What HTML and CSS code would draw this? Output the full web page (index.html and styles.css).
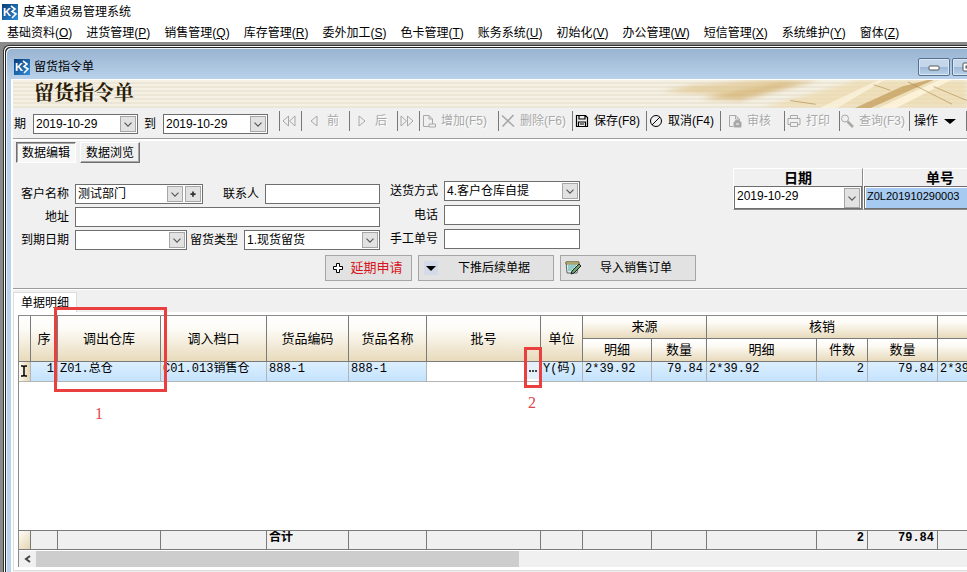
FILE: index.html
```html
<!DOCTYPE html>
<html lang="zh-CN">
<head>
    <meta charset="UTF-8">
    <meta name="viewport" content="width=device-width, initial-scale=1.0">
    <title>皮革通贸易管理系统</title>
    <link rel="stylesheet" href="styles.css">
</head>
<body>

    <!-- Shared icons -->
    <svg class="defs" width="0" height="0">
        <defs>
            <linearGradient id="logoBg" x1="0" y1="0" x2="1" y2="1">
                <stop offset="0" stop-color="#0a3c78"/>
                <stop offset="1" stop-color="#2f8fd8"/>
            </linearGradient>
            <symbol id="logo" viewBox="0 0 16 16">
                <rect width="16" height="16" fill="url(#logoBg)"/>
                <text x="1" y="12" class="logo-text">K</text>
                <path d="M9 2L13 5L10 7.500L14 10L10 14" fill="none" stroke="#fff" stroke-width="1.600"/>
            </symbol>
            <symbol id="chevron" viewBox="0 0 16 16">
                <path d="M4 6.500L8 10.500L12 6.500" fill="none" stroke="#555" stroke-width="1.300"/>
            </symbol>
        </defs>
    </svg>

    <header class="app-title">
        <svg class="logo"><use href="#logo"/></svg>
        <span>皮革通贸易管理系统</span>
    </header>

    <nav class="menu">
        <a href="#">基础资料(<u>O</u>)</a>
        <a href="#">进货管理(<u>P</u>)</a>
        <a href="#">销售管理(<u>Q</u>)</a>
        <a href="#">库存管理(<u>R</u>)</a>
        <a href="#">委外加工(<u>S</u>)</a>
        <a href="#">色卡管理(<u>T</u>)</a>
        <a href="#">账务系统(<u>U</u>)</a>
        <a href="#">初始化(<u>V</u>)</a>
        <a href="#">办公管理(<u>W</u>)</a>
        <a href="#">短信管理(<u>X</u>)</a>
        <a href="#">系统维护(<u>Y</u>)</a>
        <a href="#">窗体(<u>Z</u>)</a>
    </nav>

    <div class="workspace">
        <div class="window">
            <div class="window-title">
                <svg class="logo"><use href="#logo"/></svg>
                <span>留货指令单</span>
                <div class="window-buttons">
                    <button class="win-btn" aria-label="最小化">
                        <svg width="12" height="10"><rect x="1" y="4" width="10" height="4" rx="1" fill="#fff" stroke="#555"/></svg>
                    </button>
                    <button class="win-btn" aria-label="最大化">
                        <svg width="12" height="10"><rect x="1" y="1" width="10" height="8" rx="1" fill="#fff" stroke="#555"/><rect x="4" y="4" width="4" height="2" fill="#9db8d6" stroke="#555"/></svg>
                    </button>
                </div>
            </div>

            <div class="window-body">
                <div class="banner">
                    <h1>留货指令单</h1>
                    <svg class="banner-art" viewBox="0 0 340 30" preserveAspectRatio="none">
                        <defs><filter id="soft"><feGaussianBlur stdDeviation="2"/></filter></defs>
                        <g filter="url(#soft)">
                            <path d="M30 12L60 6L130 0H170L100 17Z" fill="#dfc48d" opacity="0.7"/>
                            <path d="M70 20L150 3L190 0L110 22Z" fill="#cfa95f" opacity="0.6"/>
                            <path d="M130 30L230 0H340V30Z" fill="#ecd8ab" opacity="0.7"/>
                        </g>
                        <path d="M190 30L250 0L256 0L208 30Z" fill="#fbf3dc" opacity="0.8"/>
                        <path d="M226 30L274 7L300 0H306L242 30Z" fill="#b98d45" opacity="0.6"/>
                        <path d="M250 30L312 0H324L268 30Z" fill="#fff6df" opacity="0.8"/>
                        <path d="M280 2L325 26M245 5L262 11M306 7L340 22M160 22L186 26" stroke="#a98244" opacity="0.6" fill="none"/>
                    </svg>
                </div>

                <div class="toolbar">
                    <div class="period">
                        <label for="dateFrom">期</label>
                        <div class="field date-field">
                            <input id="dateFrom" type="text" value="2019-10-29">
                            <button class="drop" aria-label="选择日期"><svg><use href="#chevron"/></svg></button>
                        </div>
                        <label for="dateTo">到</label>
                        <div class="field date-field">
                            <input id="dateTo" type="text" value="2019-10-29">
                            <button class="drop" aria-label="选择日期"><svg><use href="#chevron"/></svg></button>
                        </div>
                    </div>
                    <div class="tools">
                        <button class="tool tool-arrow" disabled aria-label="首张">
                            <svg viewBox="0 0 14 14"><path d="M6.500 2V12L1 7ZM13 2V12L7.500 7Z"/></svg>
                        </button>
                        <button class="tool tool-step" disabled>
                            <svg viewBox="0 0 14 14"><path d="M10 2V12L4 7Z"/></svg>前
                        </button>
                        <button class="tool tool-step" disabled>
                            <svg viewBox="0 0 14 14"><path d="M4 2V12L10 7Z"/></svg>后
                        </button>
                        <button class="tool tool-arrow" disabled aria-label="末张">
                            <svg viewBox="0 0 14 14"><path d="M1 2V12L6.500 7ZM7.500 2V12L13 7Z"/></svg>
                        </button>
                        <button class="tool tool-wide" disabled>
                            <svg viewBox="0 0 14 14"><path d="M7 12.500H1.500V1.500H7L10.500 5V7M7 1.500V5H10M10.500 7V10M7 10H13.500V13H7Z"/></svg>增加(F5)
                        </button>
                        <button class="tool tool-key" disabled>
                            <svg viewBox="0 0 14 14"><path d="M1 1.500L13 12.500M12.500 1L1.500 12.500" stroke-width="1.600"/></svg>删除(F6)
                        </button>
                        <button class="tool tool-key">
                            <svg viewBox="0 0 14 14"><path d="M1.500 1.500H10.500L12.500 3.500V12.500H1.500ZM4 1.500V5H10V1.500M3.500 12.500V8H10.500V12.500M5 10H9" stroke-width="1.200"/></svg>保存(F8)
                        </button>
                        <button class="tool tool-key">
                            <svg viewBox="0 0 14 14"><circle cx="7" cy="7" r="5.500"/><path d="M3 11L11 3"/></svg>取消(F4)
                        </button>
                        <button class="tool tool-mid" disabled>
                            <svg viewBox="0 0 14 14"><path d="M5 12.500H1.500V1.500H7.500L11.500 5V6M7.500 1.500V5H11"/><path d="M6 8H13V13H6ZM7.500 8V6.500H11.500V8" fill="#a8a8a8"/><path d="M8 10H11" stroke="#fff"/></svg>审核
                        </button>
                        <button class="tool tool-print" disabled>
                            <svg viewBox="0 0 14 14"><path d="M3.500 4.500V1.500H10.500V4.500M3 10.500H1V4.500H13V10.500H11M3.500 8.500H10.500V12.500H3.500Z"/></svg>打印
                        </button>
                        <button class="tool tool-find" disabled>
                            <svg viewBox="0 0 14 14"><circle cx="5" cy="4.500" r="3.500"/><path d="M7.500 7.500L13 13" stroke-width="2.500"/></svg>查询(F3)
                        </button>
                        <button class="tool tool-menu">操作
                            <svg viewBox="0 0 14 14"><path d="M1 5H13L7 10Z" fill="#000" stroke="none"/></svg>
                        </button>
                        <span class="tool-end"></span>
                    </div>
                </div>

                <div class="view-tabs">
                    <button class="view-tab active">数据编辑</button>
                    <button class="view-tab">数据浏览</button>
                </div>

                <form class="order-form">
                    <div class="form-left">
                        <div class="form-row">
                            <label class="lead" for="customer">客户名称</label>
                            <div class="field customer-field">
                                <input id="customer" type="text" value="测试部门">
                                <button type="button" class="drop" aria-label="选择客户"><svg><use href="#chevron"/></svg></button>
                                <button type="button" class="drop" aria-label="新增客户"><svg viewBox="0 0 16 16"><path d="M8 5V11M5 8H11" stroke="#333" stroke-width="2"/></svg></button>
                            </div>
                            <label class="contact-label" for="contact">联系人</label>
                            <input class="field grow" id="contact" type="text">
                        </div>
                        <div class="form-row">
                            <label class="lead" for="address">地址</label>
                            <input class="field grow" id="address" type="text">
                        </div>
                        <div class="form-row">
                            <label class="lead" for="dueDate">到期日期</label>
                            <div class="field due-field">
                                <input id="dueDate" type="text">
                                <button type="button" class="drop" aria-label="选择日期"><svg><use href="#chevron"/></svg></button>
                            </div>
                            <label class="type-label" for="holdType">留货类型</label>
                            <div class="field combo grow">
                                <select id="holdType"><option>1.现货留货</option></select>
                                <span class="drop"><svg><use href="#chevron"/></svg></span>
                            </div>
                        </div>
                    </div>
                    <div class="form-middle">
                        <div class="form-row">
                            <label class="second" for="delivery">送货方式</label>
                            <div class="field combo grow">
                                <select id="delivery"><option>4.客户仓库自提</option></select>
                                <span class="drop"><svg><use href="#chevron"/></svg></span>
                            </div>
                        </div>
                        <div class="form-row">
                            <label class="second" for="phone">电话</label>
                            <input class="field grow" id="phone" type="text">
                        </div>
                        <div class="form-row">
                            <label class="second" for="manualNo">手工单号</label>
                            <input class="field grow" id="manualNo" type="text">
                        </div>
                    </div>
                    <div class="doc-info">
                        <div class="doc-col doc-date">
                            <label for="docDate">日期</label>
                            <div class="field">
                                <input id="docDate" type="text" value="2019-10-29">
                                <button type="button" class="drop" aria-label="选择日期"><svg><use href="#chevron"/></svg></button>
                            </div>
                        </div>
                        <div class="doc-col doc-no">
                            <label for="docNo">单号</label>
                            <div class="field"><input id="docNo" type="text" value="Z0L201910290003"></div>
                        </div>
                    </div>
                </form>

                <div class="actions">
                    <button class="action delay">
                        <svg viewBox="0 0 16 16"><path d="M6.500 3.500H9.500V6.500H12.500V9.500H9.500V12.500H6.500V9.500H3.500V6.500H6.500Z" fill="#fff" stroke="#000"/></svg>
                        <span>延期申请</span>
                    </button>
                    <button class="action">
                        <svg viewBox="0 0 16 16"><rect x="1" y="1" width="14" height="14" fill="#d3dae8"/><path d="M3 6H13L8 11Z"/></svg>
                        <span>下推后续单据</span>
                    </button>
                    <button class="action">
                        <svg viewBox="0 0 16 16"><path d="M1 2H14L12 13H2Z" fill="#d9f0ea" stroke="#666"/><path d="M1 2H14V4H1Z" fill="#e6dc9a" stroke="#777040"/><path d="M3 6H11M3 8H9M3 10H7" stroke="#5aa"/><path d="M6 14L7 11L14 4L16 6L9 13Z" fill="#6da36d" stroke="#222"/></svg>
                        <span>导入销售订单</span>
                    </button>
                </div>

                <div class="detail">
                    <button class="detail-tab">单据明细</button>
                    <div class="detail-page">
                        <div class="grid">
                            <table>
                                <colgroup>
                                    <col class="c-mark"><col class="c-seq"><col class="c-out"><col class="c-in"><col class="c-code"><col class="c-name"><col class="c-batch"><col class="c-unit"><col class="c-src"><col class="c-srcqty"><col class="c-off"><col class="c-pcs"><col class="c-offqty"><col class="c-rest">
                                </colgroup>
                                <thead>
                                    <tr>
                                        <th rowspan="2"></th>
                                        <th rowspan="2">序</th>
                                        <th rowspan="2">调出仓库</th>
                                        <th rowspan="2">调入档口</th>
                                        <th rowspan="2">货品编码</th>
                                        <th rowspan="2">货品名称</th>
                                        <th rowspan="2">批号</th>
                                        <th rowspan="2">单位</th>
                                        <th colspan="2">来源</th>
                                        <th colspan="3">核销</th>
                                        <th></th>
                                    </tr>
                                    <tr>
                                        <th>明细</th>
                                        <th>数量</th>
                                        <th>明细</th>
                                        <th>件数</th>
                                        <th>数量</th>
                                        <th></th>
                                    </tr>
                                </thead>
                                <tbody>
                                    <tr>
                                        <td class="marker"><svg width="8" height="12" viewBox="0 0 8 12"><path d="M1 1H3L4 2L5 1H7M4 2V10M1 11H3L4 10L5 11H7" fill="none" stroke="#000" stroke-width="1.500"/></svg></td>
                                        <td class="num">1</td>
                                        <td>Z01.总仓</td>
                                        <td>C01.013销售仓</td>
                                        <td>888-1</td>
                                        <td>888-1</td>
                                        <td class="editing"><button class="more" aria-label="选择批号"><svg width="9" height="2"><path d="M0 0H2V2H0ZM3 0H5V2H3ZM6 0H8V2H6Z" fill="#444"/></svg></button></td>
                                        <td>Y(码)</td>
                                        <td>2*39.92</td>
                                        <td class="num">79.84</td>
                                        <td>2*39.92</td>
                                        <td class="num">2</td>
                                        <td class="num">79.84</td>
                                        <td>2*39.92</td>
                                    </tr>
                                </tbody>
                            </table>
                            <div class="grid-space"></div>
                            <table class="totals">
                                <colgroup>
                                    <col class="c-mark"><col class="c-seq"><col class="c-out"><col class="c-in"><col class="c-code"><col class="c-name"><col class="c-batch"><col class="c-unit"><col class="c-src"><col class="c-srcqty"><col class="c-off"><col class="c-pcs"><col class="c-offqty"><col class="c-rest">
                                </colgroup>
                                <tbody>
                                    <tr>
                                        <td class="marker"></td><td></td><td></td><td></td>
                                        <td>合计</td>
                                        <td></td><td></td><td></td><td></td><td></td><td></td>
                                        <td class="num">2</td>
                                        <td class="num">79.84</td>
                                        <td></td>
                                    </tr>
                                </tbody>
                            </table>
                            <div class="scrollbar">
                                <button class="scroll-left" aria-label="向左滚动"><svg width="8" height="8"><path d="M6 1L2 4L6 7" fill="none" stroke="#444" stroke-width="2"/></svg></button>
                                <div class="scroll-thumb"></div>
                            </div>
                        </div>

                        <!-- Numbered callouts over the grid -->
                        <div class="callout callout-1"><span>1</span></div>
                        <div class="callout callout-2"><span>2</span></div>
                    </div>
                </div>
            </div>
        </div>
    </div>

</body>
</html>
```
FILE: styles.css
```css
/* Reset margin and padding */
* {
    margin: 0;
    padding: 0;
    box-sizing: border-box;
}

body {
    display: flex;
    flex-direction: column;
    height: 100vh;
    overflow: hidden;
    background-color: #fff;
    color: #000;
    font-family: "Liberation Sans", "Noto Sans CJK SC", sans-serif;
    font-size: 12px;
    line-height: 16px;
}

button,
input,
select {
    font: inherit;
    color: inherit;
    border: none;
    border-radius: 0;
    background: none;
}

label {
    white-space: nowrap;
}

.defs {
    position: absolute;
}

.logo {
    width: 16px;
    height: 16px;
    flex: none;
}

.logo-text {
    font: bold 11px "Liberation Sans", sans-serif;
    fill: #fff;
}

/* Application title and menu */
.app-title {
    display: flex;
    align-items: center;
    gap: 5px;
    height: 23px;
    padding-left: 2px;
}

.menu {
    display: flex;
    gap: 14px;
    height: 19px;
    padding: 2px 0 0 7px;
    white-space: nowrap;
}

.menu a {
    color: #000;
    text-decoration: none;
}

/* MDI area and child window */
.workspace {
    flex: 1;
    min-height: 0;
    display: flex;
    padding: 2px 0 0 2px;
    background-color: #8a8a8a;
}

.window {
    flex: 1;
    min-width: 0;
    display: flex;
    flex-direction: column;
    padding-left: 7px;
    margin: 1px 0 0 1px;
    border-top: 1px solid #333;
    border-left: 1px solid #333;
    border-top-left-radius: 6px;
    background-color: #b9d1ea;
    box-shadow: inset 1px 1px #fff, inset 2px 2px #222, inset 3px 3px #e8f0f8;
}

.window-title {
    display: flex;
    align-items: center;
    gap: 4px;
    height: 30px;
    margin: 3px 0 0 -4px;
    padding: 5px 0 0 7px;
    border-top-left-radius: 5px;
    background: linear-gradient(#99b4d1, #b9d1ea);
}

.window-buttons {
    display: flex;
    gap: 2px;
    margin-left: auto;
    margin-right: -17px;
}

.win-btn {
    display: flex;
    align-items: center;
    justify-content: center;
    width: 32px;
    height: 18px;
    border: 1px solid #56708f;
    border-radius: 2px;
    background: linear-gradient(#c3d6ea 50%, #9db9d8 50%, #b9d1ea);
    box-shadow: inset 0 0 0 1px #dbe7f4;
}

.window-body {
    flex: 1;
    min-height: 0;
    min-width: 0;
    display: flex;
    flex-direction: column;
    border-left: 2px solid #fff;
    background-color: #f0f0f0;
}

.banner {
    display: flex;
    justify-content: space-between;
    height: 29px;
    background: repeating-linear-gradient(#f4f0e3 0 2px, #ece6d6 2px 4px);
    border-top: 1px solid #fff;
}

.banner h1 {
    padding-left: 21px;
    font-family: "Noto Serif CJK SC", "Noto Sans CJK SC", serif;
    font-size: 20px;
    line-height: 24px;
    color: #2a1c08;
}

.banner-art {
    width: 35%;
    height: 28px;
}

/* Boxes that hold an input and its drop buttons */
.field {
    display: flex;
    align-items: center;
    gap: 2px;
    height: 20px;
    min-width: 0;
    padding: 1px;
    border: 1px solid #6e6e6e;
    background-color: #fff;
}

.field input,
.field select {
    flex: 1;
    width: 100%;
    min-width: 0;
    height: 16px;
    padding-left: 1px;
    outline: none;
}

.combo select {
    appearance: none;
}

.drop {
    flex: none;
    display: flex;
    width: 16px;
    height: 16px;
    border: 1px solid #a6a6a6;
    background-color: #e2e2e2;
}

.drop svg {
    width: 14px;
    height: 14px;
}

.grow {
    flex: 1;
}

/* Toolbar */
.toolbar {
    display: flex;
    height: 31px;
    padding-top: 3px;
    border-bottom: 1px solid #9c9c9c;
    box-shadow: 0 2px #fff;
}

.period {
    display: flex;
    align-items: center;
    width: 266px;
    height: 26px;
    padding-left: 1px;
    flex: none;
}

.period label {
    width: 19px;
}

.date-field {
    width: 105px;
    margin-right: 6px;
}

.tools {
    display: flex;
    height: 20px;
}

.tool {
    display: flex;
    align-items: center;
    gap: 5px;
    padding-left: 2px;
    border-left: 1px solid #777;
    white-space: nowrap;
}

.tool:disabled {
    color: #a8a8a8;
    text-shadow: 1px 1px #fff;
}

.tool svg {
    width: 14px;
    height: 14px;
    fill: none;
    stroke: currentColor;
}

.tool-arrow {
    width: 22px;
}

.tool-step {
    width: 48px;
    padding-left: 5px;
    gap: 6px;
}

.tool-wide {
    width: 79px;
}

.tool-key {
    width: 74px;
}

.tool-mid {
    width: 64px;
    padding-left: 7px;
}

.tool-print {
    width: 55px;
}

.tool-find {
    width: 70px;
    padding-left: 0;
}

.tool-menu {
    width: 57px;
    padding-left: 4px;
}

.tool-end {
    border-left: 1px solid #777;
}

/* Edit / browse switch */
.view-tabs {
    display: flex;
    gap: 4px;
    padding: 3px 0 0 3px;
}

.view-tab {
    width: 60px;
    height: 21px;
    border: 1px solid;
    border-color: #fff #6e6e6e #6e6e6e #fff;
    box-shadow: inset -1px -1px #a8a8a8;
}

.view-tab.active {
    border-color: #6e6e6e #fff #fff #6e6e6e;
    box-shadow: inset 1px 1px #a8a8a8;
    background-color: #f8f8f8;
}

/* Order form */
.order-form {
    display: flex;
    height: 88px;
    flex: none;
    overflow: hidden;
}

.form-left,
.form-middle {
    display: flex;
    flex-direction: column;
    flex: none;
}

.form-left {
    gap: 3px;
    width: 367px;
    padding-top: 21px;
}

.form-middle {
    gap: 4px;
    width: 200px;
    padding: 18px 0 0 9px;
}

.form-row {
    display: flex;
    align-items: center;
}

.lead {
    width: 62px;
    padding-right: 6px;
    text-align: right;
}

.second {
    width: 55px;
    padding-right: 6px;
    text-align: right;
}

.customer-field {
    width: 128px;
}

.due-field {
    width: 112px;
}

.contact-label {
    padding: 0 6px 0 20px;
}

.type-label {
    padding: 0 6px 0 3px;
}

.doc-info {
    display: flex;
    margin: 5px -50px 0 auto;
    height: 42px;
}

.doc-col {
    display: flex;
    flex-direction: column;
    border-top: 1px solid #fff;
    border-left: 1px solid #fff;
    border-right: 1px solid #8a8a8a;
    border-bottom: 1px solid #8a8a8a;
}

.doc-col label {
    height: 17px;
    font-size: 14px;
    font-weight: bold;
    line-height: 18px;
    text-align: center;
}

.doc-col .field {
    flex: 1;
}

.doc-col input {
    height: 20px;
    padding-bottom: 4px;
}

.doc-date {
    width: 130px;
}

.doc-date .drop {
    height: 20px;
    align-items: center;
}

.doc-no {
    width: 154px;
}

.doc-no input {
    background-color: #a6caf0;
    font-size: 11px;
}

/* Action buttons */
.actions {
    display: flex;
    gap: 6px;
    padding: 4px 0 7px 312px;
    border-bottom: 1px solid #9c9c9c;
    box-shadow: 0 1px #fff;
}

.action {
    display: flex;
    align-items: center;
    width: 136px;
    height: 26px;
    padding: 0 4px;
    border: 1px solid #a6a6a6;
    background-color: #e2e2e2;
}

.action svg {
    width: 16px;
    height: 16px;
    flex: none;
}

.action span {
    flex: 1;
    text-align: center;
}

.action.delay {
    width: 87px;
    color: #d8141c;
    font-size: 13px;
}

/* Detail page */
.detail {
    flex: 1;
    min-height: 0;
    display: flex;
    flex-direction: column;
    padding-top: 3px;
}

.detail-tab {
    width: 64px;
    height: 20px;
    border: 1px solid #dcdcdc;
    border-bottom: none;
    background-color: #fff;
}

.detail-page {
    position: relative;
    flex: 1;
    min-height: 0;
    display: flex;
    margin-bottom: 1px;
    padding: 3px 0 3px 4px;
    border-bottom: 1px solid #dcdcdc;
    border-left: 1px solid #dcdcdc;
    background-color: #fff;
}

.grid {
    flex: 1;
    min-width: 0;
    display: flex;
    flex-direction: column;
    overflow: hidden;
    border-top: 1px solid #8a8a8a;
    border-left: 1px solid #8a8a8a;
}

.grid table {
    flex: none;
    width: 1056px;
    table-layout: fixed;
    border-collapse: separate;
    border-spacing: 0;
    font-family: "Liberation Mono", "Noto Sans CJK SC", monospace;
    white-space: nowrap;
}

.c-mark { width: 12px; }
.c-seq { width: 27px; }
.c-out { width: 103px; }
.c-in { width: 106px; }
.c-code { width: 82px; }
.c-name { width: 78px; }
.c-batch { width: 114px; }
.c-unit { width: 42px; }
.c-src { width: 69px; }
.c-srcqty { width: 55px; }
.c-off { width: 110px; }
.c-pcs { width: 51px; }
.c-offqty { width: 70px; }
.c-rest { width: 137px; }

.grid th {
    height: 23px;
    padding-top: 2px;
    border-right: 1px solid #7a7a7a;
    border-bottom: 1px solid #7a7a7a;
    background: linear-gradient(#fff, #fdfbf6 30%, #e8dabb);
    font-size: 13px;
    font-weight: normal;
}

.grid td {
    height: 20px;
    padding: 0 2px;
    border-right: 1px solid #b4b4b4;
    border-bottom: 1px solid #b4b4b4;
    background: linear-gradient(#dcefff, #c4e3fd);
    line-height: 14px;
    vertical-align: top;
    overflow: hidden;
}

.grid td.num {
    padding-right: 3px;
    text-align: right;
}

.grid td.marker {
    padding: 3px 1px 0;
    background: linear-gradient(90deg, #fdfaf2, #e4d5b2);
    line-height: 0;
}

.grid td.editing {
    padding: 0;
    background: #fff;
}

.more {
    display: flex;
    align-items: center;
    justify-content: center;
    width: 13px;
    height: 17px;
    margin-left: auto;
    background-color: #e4f1fc;
}

.grid-space {
    flex: 1;
}

.grid .totals td {
    border-color: #7a7a7a;
    border-top: 1px solid #7a7a7a;
    background: #f0f0f0;
    font-weight: bold;
}

.grid .totals td.marker {
    background: linear-gradient(135deg, #fffdf8, #e4d5b2);
}

.scrollbar {
    display: flex;
    flex: none;
    height: 16px;
    margin-top: 1px;
    background-color: #f0f0f0;
}

.scroll-left {
    width: 17px;
}

.scroll-thumb {
    width: 51%;
    background-color: #cdcdcd;
}

/* Callouts */
.callout {
    position: absolute;
    border: 3px solid #ea3f3f;
    pointer-events: none;
}

.callout span {
    position: absolute;
    color: #e0474c;
    font-family: "Liberation Serif", serif;
    font-size: 16px;
}

.callout-1 {
    top: -5px;
    left: 40px;
    width: 113px;
    height: 85px;
}

.callout-1 span {
    top: 96px;
    left: 38px;
}

.callout-2 {
    top: 35px;
    left: 510px;
    width: 18px;
    height: 41px;
}

.callout-2 span {
    top: 45px;
    left: 1px;
}
```
